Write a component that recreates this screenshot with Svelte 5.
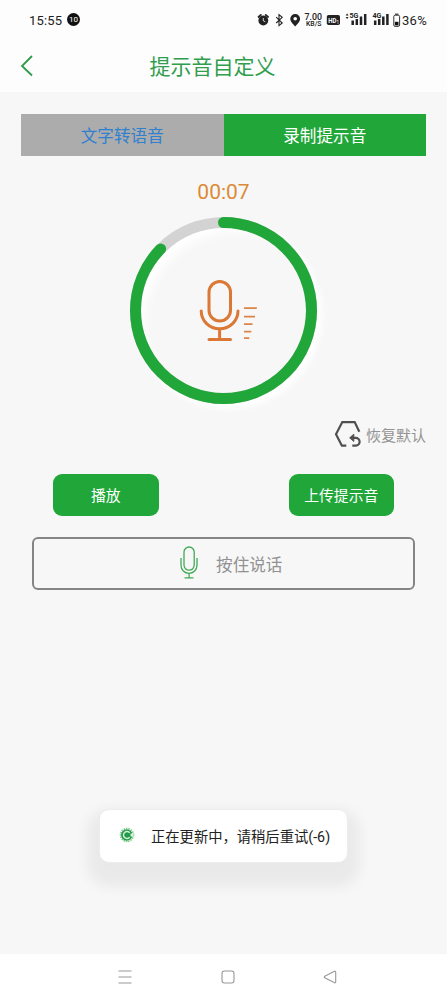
<script>
  let seconds = 7;
  let progress = 0.872;
  let mode = "record";

  const radius = 88;
  const circumference = 2 * Math.PI * radius;

  $: time = "00:" + String(seconds).padStart(2, "0");
  $: dash = `${circumference * progress} ${circumference}`;
</script>

<div class="screen">
  <div class="status">
    <span class="clock">15:55</span>
    <span class="count">10</span>
    <svg class="indicators" width="146" height="24" viewBox="255 8 146 24">
      <!-- alarm -->
      <circle cx="263.3" cy="20.5" r="4.9" fill="#222" />
      <path d="M258.5 17l2.4-2.2M268.1 17l-2.4-2.2" stroke="#222" stroke-width="1.7" stroke-linecap="round" />
      <path d="M263.3 18v2.8l2 1" fill="none" stroke="#fff" stroke-width="0.8" />
      <!-- bluetooth -->
      <path d="M276.2 17.2l6 5.8-3.2 2.6V14.6l3.2 2.7-6 5.7" fill="none" stroke="#222" stroke-width="1.1" />
      <!-- location -->
      <path d="M295.2 14a4.9 4.9 0 0 0-4.9 4.9c0 3 3.2 5.2 4.9 7.6 1.7-2.4 4.9-4.6 4.9-7.6a4.9 4.9 0 0 0-4.9-4.9z" fill="#222" />
      <circle cx="295.2" cy="18.7" r="1.8" fill="#fff" />
      <text x="304.5" y="20" font-size="9" font-weight="500" textLength="17.5" lengthAdjust="spacingAndGlyphs">7.00</text>
      <text x="306" y="26" font-size="6.5" font-weight="500" textLength="15.5" lengthAdjust="spacingAndGlyphs">KB/S</text>
      <rect x="326.8" y="15" width="13.2" height="10" rx="1.8" fill="#222" />
      <text class="light" x="328.2" y="22.8" font-size="7.2" font-weight="700" textLength="8.2" lengthAdjust="spacingAndGlyphs">HD</text>
      <text class="light" x="336.6" y="24" font-size="4.5">1</text>
      <path d="M345.6 15.6l1.5-2 1.5 2zM345.6 17l1.5 2 1.5-2z" fill="#222" />
      <text x="349.4" y="18.4" font-size="7.4" font-weight="700" textLength="9" lengthAdjust="spacingAndGlyphs">5G</text>
      <path d="M352.7 25v-4.5M356.8 25v-6M361 25v-8.5M365.2 25v-11" stroke="#222" stroke-width="2.5" />
      <text x="372.5" y="18.4" font-size="7.4" font-weight="700" textLength="9" lengthAdjust="spacingAndGlyphs">4G</text>
      <path d="M375.2 25v-4.5M379.2 25v-6M383.3 25v-8.5M387.4 25v-11" stroke="#222" stroke-width="2.5" />
      <!-- battery -->
      <rect x="393.8" y="15.2" width="5.8" height="11.2" rx="1.4" fill="none" stroke="#333" stroke-width="1" />
      <path d="M395 14.2h3.4" stroke="#333" stroke-width="1.2" />
      <rect x="394.9" y="21.8" width="3.6" height="3.6" fill="#111" />
    </svg>
    <span class="battery">36%</span>
  </div>

  <header>
    <svg class="back" width="14" height="24" viewBox="0 0 14 24">
      <path d="M12 2L2 12l10 9.5" fill="none" stroke="#2b9c48" stroke-width="1.8" />
    </svg>
    <h1>提示音自定义</h1>
  </header>

  <main>
    <div class="tabs">
      <button class:active={mode === "text"} on:click={() => (mode = "text")}>文字转语音</button>
      <button class:active={mode === "record"} on:click={() => (mode = "record")}>录制提示音</button>
    </div>

    <div class="time">{time}</div>

    <div class="dial">
      <svg width="187" height="187" viewBox="0 0 187 187" fill="none">
        <circle cx="93.5" cy="93.5" r={radius} stroke="#d3d3d3" stroke-width="11" />
        <circle
          cx="93.5"
          cy="93.5"
          r={radius}
          stroke="#21a739"
          stroke-width="11"
          stroke-linecap="round"
          stroke-dasharray={dash}
          transform="rotate(-90 93.5 93.5)"
        />
        <g stroke="#db7835" stroke-width="3" stroke-linecap="round">
          <rect x="79" y="64.5" width="21.5" height="39.5" rx="10.75" />
          <path d="M71.2 94a18.4 17.8 0 0 0 36.8 0M89.6 112v10M79 122.5h21.5" />
        </g>
        <path
          d="M114 91.2h12.8M114 99.7h11M114 107.2h8.5M114 114.6h7.3M114 121.2h5.3"
          stroke="#db8548"
          stroke-width="1.8"
        />
      </svg>
    </div>

    <div class="reset">
      <svg width="28" height="28" viewBox="0 0 28 28" fill="none" stroke="#505050" stroke-width="2.2">
        <path d="M12.3 25.7H7.9L2 14.2 8.3 2.1h12.4l4.6 9.6" />
        <path d="M17.5 17.8h4.2a3.9 3.9 0 0 1 0 7.8h-3.4" />
        <path d="M19.8 14.2v7.2l-4.1-3.6z" fill="#505050" stroke-width="1" />
      </svg>
      <span>恢复默认</span>
    </div>

    <div class="actions">
      <button>播放</button>
      <button>上传提示音</button>
    </div>

    <button class="hold">
      <svg width="18" height="34" viewBox="0 0 18 34" fill="none" stroke="#43a957" stroke-width="1.3">
        <rect x="4" y="1" width="10.2" height="23.2" rx="5.1" />
        <path d="M1 12v7.3a8 8 0 0 0 16 0V12M9.1 27.3v4.5M4.5 31.8h9" />
      </svg>
      <span>按住说话</span>
    </button>

    <div class="toast">
      <svg width="16" height="16" viewBox="0 0 16 16" fill="none">
        <circle cx="8" cy="8" r="6.5" stroke="#7fce8d" stroke-width="1.6" stroke-dasharray="1.5 0.9" />
        <circle cx="7.8" cy="8" r="5.8" fill="#25994a" />
        <path d="M10.7 5.8a3.5 3.5 0 1 0 0 4.4" stroke="#d8f3dc" stroke-width="1.4" />
        <path d="M11.5 8h3" stroke="#d8f3dc" stroke-width="3" />
      </svg>
      <span>正在更新中，请稍后重试(-6)</span>
    </div>
  </main>

  <nav>
    <svg width="14" height="14" viewBox="0 0 14 14">
      <path d="M.5 1h13M.5 7h13M.5 13h13" />
    </svg>
    <svg width="14" height="14" viewBox="0 0 14 14">
      <rect x="1" y="1" width="12" height="12" rx="2.5" />
    </svg>
    <svg width="14" height="14" viewBox="0 0 14 14">
      <path d="M11.5 1.2L1.8 6.2q-1 .8 0 1.6l9.7 5q1.2.3 1.2-1V2.2q0-1.3-1.2-1z" />
    </svg>
  </nav>
</div>

<style>
  :global(body) {
    margin: 0;
  }

  .screen {
    width: 447px;
    height: 1000px;
    display: flex;
    flex-direction: column;
    overflow: hidden;
    background-color: #fdfdfd;
    font-family: Roboto, "Noto Sans CJK SC", sans-serif;
  }

  .status {
    height: 40px;
    padding-left: 29px;
    box-sizing: border-box;
    display: flex;
    align-items: center;
    color: #222;
  }

  .clock {
    width: 38px;
    font-size: 13px;
    letter-spacing: 0.2px;
  }

  .count {
    width: 13px;
    height: 13px;
    line-height: 13px;
    border-radius: 50%;
    background-color: #111;
    color: white;
    font-size: 8px;
    text-align: center;
    margin-top: -2px;
  }

  .indicators {
    margin-left: 175px;
  }

  .indicators text {
    fill: #222;
  }

  .indicators .light {
    fill: white;
  }

  .battery {
    margin-left: 1px;
    font-size: 13px;
    letter-spacing: 0.3px;
  }

  header {
    height: 52px;
    display: flex;
    align-items: center;
  }

  .back {
    margin-left: 20px;
  }

  h1 {
    margin: 2px 0 0 115.5px;
    font-size: 21px;
    line-height: 30px;
    font-weight: 400;
    color: #309e4d;
  }

  main {
    height: 862px;
    display: flex;
    flex-direction: column;
    background-color: #f7f7f7;
  }

  button {
    border: none;
    padding: 0;
    font-family: inherit;
    cursor: pointer;
  }

  .tabs {
    height: 42px;
    margin: 21.5px 21px 0;
    display: flex;
    flex-shrink: 0;
  }

  .tabs button {
    flex: 1;
    font-size: 16.6px;
    background-color: #acacac;
    color: #2f80cf;
  }

  .tabs button.active {
    background-color: #21a739;
    color: white;
  }

  .time {
    height: 30px;
    line-height: 30px;
    margin-top: 21px;
    text-align: center;
    font-size: 21px;
    color: #dc8a36;
  }

  .dial {
    width: 187px;
    height: 187px;
    margin: 10.5px 0 0 130px;
    border-radius: 50%;
    box-shadow:
      5px 5px 7px #fff,
      inset 14px 14px 12px #fff;
  }

  .dial svg {
    display: block;
    margin-top: -0.5px;
  }

  .reset {
    height: 28px;
    margin: 16px 0 0 334px;
    display: flex;
    align-items: center;
    gap: 4px;
    font-size: 15px;
    color: #929292;
  }

  .actions {
    height: 42px;
    margin: 26px 53px 0;
    display: flex;
    justify-content: space-between;
  }

  .actions button {
    width: 105.5px;
    padding-bottom: 1px;
    border-radius: 9px;
    background-color: #21a739;
    color: white;
    font-size: 14.8px;
  }

  .hold {
    height: 53px;
    margin: 21px 32px 0 31.5px;
    box-sizing: border-box;
    display: flex;
    align-items: center;
    justify-content: center;
    gap: 18px;
    border: 2px solid #858585;
    border-radius: 6px;
    background-color: transparent;
    color: #929292;
    font-size: 16.6px;
  }

  .hold svg {
    margin: -2px 0 0 16px;
  }

  .toast {
    width: 249px;
    height: 54px;
    margin: 219px 0 0 99px;
    padding-left: 19px;
    box-sizing: border-box;
    display: flex;
    align-items: center;
    gap: 16px;
    border: 1px solid #ececec;
    border-radius: 10px;
    background-color: white;
    box-shadow: 0 12px 13px 12px rgba(0, 0, 0, 0.055);
    color: #222;
    font-size: 14.3px;
    white-space: nowrap;
  }

  .toast svg {
    margin-top: -2px;
  }

  .toast span {
    margin-top: -1px;
  }

  nav {
    flex: 1;
    padding: 0 110px 0 118px;
    display: flex;
    align-items: center;
    justify-content: space-between;
    background-color: white;
  }

  nav svg {
    fill: none;
    stroke: #989898;
    stroke-width: 1.1;
  }
</style>
